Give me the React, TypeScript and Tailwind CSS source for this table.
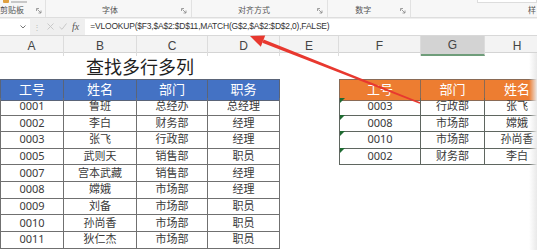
import React from 'react'

const cols = 'grid grid-cols-[64px_73px_71px_72px_59px_82px_64px_65px] w-[550px]'
const letters = ['A', 'B', 'C', 'D', 'E', 'F', 'G', 'H']

const left = [
  ['0001', '鲁班', '总经办', '总经理'],
  ['0002', '李白', '财务部', '经理'],
  ['0003', '张飞', '行政部', '经理'],
  ['0005', '武则天', '销售部', '职员'],
  ['0007', '宫本武藏', '销售部', '经理'],
  ['0008', '嫦娥', '市场部', '经理'],
  ['0009', '刘备', '市场部', '职员'],
  ['0010', '孙尚香', '市场部', '职员'],
  ['0011', '狄仁杰', '市场部', '职员'],
]

const right = [
  ['0003', '行政部', '张飞'],
  ['0008', '市场部', '嫦娥'],
  ['0010', '市场部', '孙尚香'],
  ['0002', '财务部', '李白'],
]

const font = { fontFamily: '"Noto Sans", "Noto Sans CJK SC", sans-serif' }

const Launcher = () => (
  <svg width="6" height="6" viewBox="0 0 6 6" className="text-[#888]">
    <path d="M0.5 3V0.5H3" fill="none" stroke="currentColor" strokeWidth="0.8" />
    <path d="M1.5 1.5L5 5M5 2.5V5H2.5" fill="none" stroke="currentColor" strokeWidth="0.8" />
  </svg>
)

const Ribbon = () => (
  <div className="flex h-[18px] bg-[#f7f7f7] border-b border-[#dedede] text-[8px] leading-none text-[#555]">
    <div className="w-[47px] flex flex-col justify-between pb-[3px] pr-[3px] border-r border-[#e2e2e2]">
      <div className="flex items-center gap-[2px] pl-[3px]">
        <span className="w-[6px] h-[3px] bg-[#e0a040] rounded-b-[1px]" />
        <span className="w-[16px] h-[2px] bg-[#c8c8c8]" />
      </div>
      <div className="flex items-end justify-between">
        <span>剪贴板</span>
        <Launcher />
      </div>
    </div>
    <div className="w-[148px] flex items-end justify-between pb-[3px] pr-[4px] pl-[56px] border-r border-[#e2e2e2]">
      <span>字体</span>
      <Launcher />
    </div>
    <div className="w-[138px] flex items-end justify-between pb-[3px] pr-[4px] pl-[46px] border-r border-[#e2e2e2]">
      <span>对齐方式</span>
      <Launcher />
    </div>
    <div className="w-[84px] flex items-end justify-between pb-[3px] pr-[4px] pl-[27px] border-r border-[#e2e2e2]">
      <span>数字</span>
      <Launcher />
    </div>
    <div className="flex-1 flex flex-col justify-between pb-[3px]">
      <div className="ml-[66px] w-[60px] h-[3px] bg-white border-b border-x border-[#ddd]" />
      <div className="flex justify-end pr-[1px]">
        <span>样</span>
      </div>
    </div>
  </div>
)

const FormulaBar = () => (
  <div className="flex items-center h-[18px] bg-[#efefef] border-b border-[#d8d8d8]">
    <div className="w-[30px] h-[16px] bg-white flex items-center justify-end pr-[4px]">
      <svg width="6" height="4" viewBox="0 0 6 4">
        <path d="M0.5 0.5L3 3L5.5 0.5" fill="none" stroke="#777" strokeWidth="1" />
      </svg>
    </div>
    <span className="ml-[3px] text-[8px] text-[#bbb] leading-none">⋮</span>
    <div className="ml-[6px] flex items-center gap-[5px] text-[#c4c4c4]">
      <svg width="7" height="7" viewBox="0 0 7 7">
        <path d="M0.5 0.5L6.5 6.5M6.5 0.5L0.5 6.5" stroke="currentColor" strokeWidth="0.9" />
      </svg>
      <svg width="8" height="7" viewBox="0 0 8 7">
        <path d="M0.5 4L3 6.3L7.5 0.5" fill="none" stroke="currentColor" strokeWidth="0.9" />
      </svg>
    </div>
    <span
      className="ml-[5px] text-[10px] italic text-[#555] leading-none"
      style={{ fontFamily: '"Liberation Serif", serif' }}
    >
      fx
    </span>
    <div className="ml-[6px] flex-1 h-[16px] bg-white flex items-center pl-[5px]">
      <span
        className="text-[8.5px] text-[#333] tracking-[-0.2px] whitespace-nowrap"
        style={{ fontFamily: '"Liberation Sans", Arial, sans-serif' }}
      >
        =VLOOKUP($F3,$A$2:$D$11,MATCH(G$2,$A$2:$D$2,0),FALSE)
      </span>
    </div>
  </div>
)

const ColumnHeaders = () => (
  <div className={`${cols} h-[17px] bg-[#f3f3f3] border-b border-[#d4d4d4]`}>
    {letters.map((l) => (
      <div
        key={l}
        className={`flex items-center justify-center border-r border-[#dcdcdc] text-[12px] text-[#444] ${
          l === 'G' ? 'bg-[#d3d3d3] border-b-2 border-b-[#6f9d7a]' : ''
        }`}
        style={{ fontFamily: '"Liberation Sans", Arial, sans-serif' }}
      >
        {l}
      </div>
    ))}
  </div>
)

const Cell = ({
  children,
  className = '',
}: {
  children?: React.ReactNode
  className?: string
}) => (
  <div className={`relative flex items-center justify-center border-r border-b ${className}`}>
    {children}
  </div>
)

const Flag = () => (
  <svg width="5" height="5" viewBox="0 0 5 5" className="absolute left-0 top-0">
    <path d="M0 0H5L0 5Z" fill="#1f6b32" />
  </svg>
)

export default function App() {
  return (
    <div className="relative w-[537px] h-[250px] overflow-hidden bg-white" style={font}>
      <Ribbon />
      <FormulaBar />
      <ColumnHeaders />

      <div className={`${cols} h-[26px]`}>
        <div className="col-span-4 flex items-center justify-center text-[18px] font-normal text-[#1e1e1e] pt-[1px]">
          查找多行多列
        </div>
      </div>

      <div className={`${cols} h-[19px] text-[13px] text-white`}>
        {['工号', '姓名', '部门', '职务'].map((h, i) => (
          <Cell key={h} className={`bg-[#4472c4] border-[#5a6478] border-t ${i === 0 ? 'border-l' : ''}`}>
            {h}
          </Cell>
        ))}
        <div />
        {['工号', '部门', '姓名'].map((h, i) => (
          <Cell key={h + i} className={`bg-[#ed7d31] border-[#8a6a55] border-t ${i === 0 ? 'border-l' : ''}`}>
            {h}
          </Cell>
        ))}
      </div>

      {left.map((row, r) => (
        <div key={row[0]} className={`${cols} h-[16.67px] text-[11px] text-[#3a3a3a]`}>
          {row.map((v, i) => (
            <Cell key={i} className={`border-[#707070] ${i === 0 ? 'border-l' : ''}`}>
              {v}
            </Cell>
          ))}
          <div />
          {right[r] ? (
            right[r].map((v, i) => (
              <Cell key={i} className={`border-[#5f6660] ${i === 0 ? 'border-l' : ''}`}>
                {i === 0 && <Flag />}
                {v}
              </Cell>
            ))
          ) : (
            <>
              <div />
              <div />
              <div />
            </>
          )}
        </div>
      ))}

      <div className="absolute right-0 top-[53px] bottom-0 w-[8px] bg-gradient-to-r from-transparent to-[#e9e9e9]" />

      <svg className="absolute inset-0 pointer-events-none" width="537" height="250" viewBox="0 0 537 250">
        <polygon points="420.3,102.3 419.7,103.7 262.3,42.8 263.7,39.4" fill="#e8382f" />
        <polygon points="250,36 265.2,35.5 260.8,46.7" fill="#e8382f" />
      </svg>
    </div>
  )
}
